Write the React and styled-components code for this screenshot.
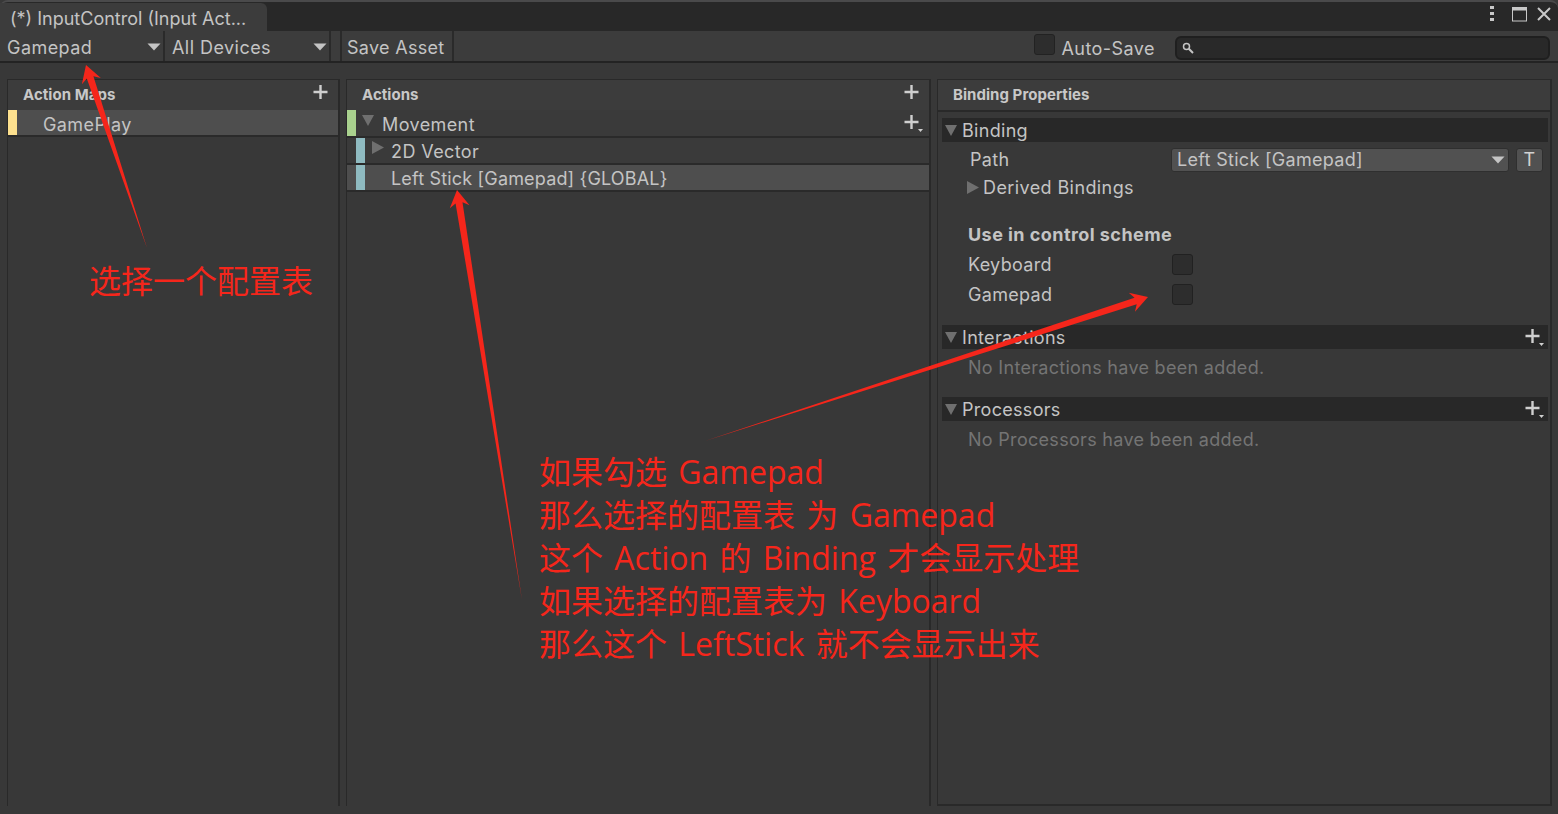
import React from 'react'
import styled, { createGlobalStyle } from 'styled-components'

const GlobalStyle = createGlobalStyle`
  html, body {
    margin: 0;
    background: #383838;
    overflow: hidden;
  }
  * { box-sizing: border-box; }
`

const Window = styled.div`
  position: relative;
  width: 1558px;
  height: 814px;
  display: flex;
  flex-direction: column;
  background: #383838;
  color: #c4c4c4;
  font-family: Inter, "Noto Sans", sans-serif;
  font-size: 18px;
  letter-spacing: 0.3px;
  overflow: hidden;
`

const TabBar = styled.div`
  height: 31px;
  flex: none;
  display: flex;
  align-items: flex-end;
  justify-content: space-between;
  background: #282828;
  border-top: 2px solid #4a4a4b;
  border-radius: 8px 8px 0 0;
`

const Tab = styled.div`
  width: 267px;
  height: 28px;
  padding: 2px 0 0 10px;
  display: flex;
  align-items: center;
  background: #3c3c3c;
  border-radius: 0 6px 0 0;
  letter-spacing: 0;
`

const WindowButtons = styled.div`
  display: flex;
  align-items: center;
  padding: 0 7px 9px 0;
`

const ButtonSlot = styled.span`
  display: flex;
  margin-right: ${p => p.$gap || 0}px;
`

const Toolbar = styled.div`
  height: 32px;
  flex: none;
  display: flex;
  align-items: stretch;
  padding-left: 3px;
  background: #3c3c3c;
  border-bottom: 2px solid #232323;
`

const ToolSelect = styled.div`
  width: ${p => p.$width}px;
  padding: 2px 2px 0 4px;
  margin-right: 3px;
  display: flex;
  align-items: center;
  justify-content: space-between;
  border-right: 2px solid #2a2a2a;
  letter-spacing: 0.45px;
`

const ToolSpacer = styled.div`
  width: 8px;
  border-right: 2px solid #2a2a2a;
`

const ToolButton = styled.div`
  width: 112px;
  padding: 2px 0 0 5px;
  display: flex;
  align-items: center;
  border-right: 2px solid #2a2a2a;
`

const ToolRight = styled.div`
  flex: 1;
  display: flex;
  align-items: center;
  justify-content: flex-end;
  padding-right: 8px;
`

const AutoSave = styled.div`
  margin-right: 20px;
  padding-top: 4px;
  letter-spacing: 0.45px;
`

const SmallCheck = styled.div`
  width: 21px;
  height: 21px;
  margin: -3px 6px 0 0;
  background: #2d2d2d;
  border: 1px solid #222;
  border-radius: 3px;
`

const Search = styled.div`
  width: 375px;
  height: 24px;
  margin-top: 3px;
  padding-left: 5px;
  display: flex;
  align-items: center;
  background: #292929;
  border: 2px solid #1f1f1f;
  border-radius: 6px;
`

const Panes = styled.div`
  flex: 1;
  display: flex;
  gap: 6px;
  padding: 16px 6px 8px 7px;
  min-height: 0;
`

const Pane = styled.div`
  width: ${p => p.$width}px;
  flex: none;
  display: flex;
  flex-direction: column;
  border: solid #292929;
  border-width: 1px 2px ${p => (p.$closed ? '2px' : '0')} 1px;
`

const PaneHeader = styled.div`
  height: ${p => (p.$line ? 32 : 30)}px;
  flex: none;
  padding: 0 5px ${p => (p.$line ? 1 : 2)}px 15px;
  display: flex;
  align-items: center;
  justify-content: space-between;
  background: #3c3c3c;
  font-size: 15px;
  font-weight: 700;
  letter-spacing: 0.05px;
  color: #c8c8c8;
  border-bottom: ${p => (p.$line ? '2px solid #292929' : '0')};
`

const Row = styled.div`
  height: ${p => p.$height || 27}px;
  flex: none;
  display: flex;
  align-items: center;
  background: ${p => (p.$selected ? '#4e4e4e' : '#3a3a3a')};
  border-bottom: 2px solid #2a2a2a;
`

const Strip = styled.div`
  width: ${p => p.$width || 9}px;
  height: 100%;
  flex: none;
  margin-left: ${p => p.$indent || 0}px;
  background: ${p => p.$color};
`

const RowLabel = styled.span`
  margin-left: ${p => p.$left}px;
  padding-top: ${p => p.$top ?? 2}px;
  white-space: nowrap;
  letter-spacing: ${p => (p.$tight ? '0.17px' : '0.4px')};
`

const RowEnd = styled.div`
  margin-left: auto;
  padding-right: ${p => p.$pad ?? 5}px;
  display: flex;
  align-items: center;
`

const Twist = styled.span`
  margin-left: ${p => p.$left}px;
  margin-top: -6px;
  width: 12px;
  display: flex;
  flex: none;
`

const PropertyBody = styled.div`
  flex: 1;
  padding: 6px 2px 0 4px;
`

const FoldBar = styled.div`
  height: 24px;
  padding-left: 3px;
  display: flex;
  align-items: center;
  gap: 5px;
  background: #282828;
  margin-top: ${p => p.$top || 0}px;
`

const Field = styled.div`
  height: ${p => p.$height || 30}px;
  padding-left: ${p => p.$left || 26}px;
  display: flex;
  align-items: center;
  margin-top: ${p => p.$top || 0}px;
  font-weight: ${p => (p.$bold ? 700 : 400)};
  letter-spacing: ${p => (p.$bold ? '0.45px' : 'inherit')};
  color: ${p => (p.$muted ? '#747474' : '#c4c4c4')};
`

const FieldName = styled.span`
  width: ${p => p.$width || 204}px;
  flex: none;
`

const PathSelect = styled.div`
  width: 338px;
  height: 24px;
  padding: 0 3px 0 5px;
  display: flex;
  align-items: center;
  justify-content: space-between;
  background: #515151;
  border: 1px solid #2f2f2f;
  border-radius: 3px;
`

const TButton = styled.div`
  width: 27px;
  height: 24px;
  margin-left: 7px;
  display: flex;
  align-items: center;
  justify-content: center;
  background: #515151;
  border: 1px solid #2f2f2f;
  border-radius: 3px;
  color: #d2d2d2;
`

const Check = styled.div`
  width: 21px;
  height: 21px;
  background: #2d2d2d;
  border: 1px solid #212121;
  border-radius: 3px;
`

const Overlay = styled.svg`
  position: absolute;
  left: 0;
  top: 0;
  pointer-events: none;
`

const Note = styled.div`
  position: absolute;
  left: ${p => p.$x}px;
  top: ${p => p.$y}px;
  color: #f5261b;
  font-family: "Open Sans", "Noto Sans CJK SC", sans-serif;
  font-size: 32px;
  line-height: 43px;
  letter-spacing: 0;
  word-spacing: 3px;
  white-space: pre;
`

const Caret = () => (
  <svg width="14" height="8" viewBox="0 0 14 8"><path d="M0.5 0.5h13L7 7.5z" fill="#c4c4c4" /></svg>
)

const Down = () => (
  <svg width="12" height="12" viewBox="0 0 12 12"><path d="M0 1h12L6 12z" fill="#6f6f6f" /></svg>
)

const Right = () => (
  <svg width="12" height="13" viewBox="0 0 12 13"><path d="M0 0l12 6.5L0 13z" fill="#6f6f6f" /></svg>
)

const Plus = ({ more }) => (
  <svg width="20" height="20" viewBox="0 0 20 20">
    {more
      ? <path d="M7.500 2v14M0.500 9h14" stroke="#cfcfcf" strokeWidth="2.400" fill="none" />
      : <path d="M7.500 1v14M0.500 8h14" stroke="#cfcfcf" strokeWidth="2.400" fill="none" />}
    {more && <path d="M14 16h5l-2.500 3z" fill="#cfcfcf" />}
  </svg>
)

const Lens = () => (
  <svg width="12" height="12" viewBox="0 0 12 12">
    <circle cx="4.500" cy="4.500" r="3" stroke="#c4c4c4" strokeWidth="1.500" fill="none" />
    <path d="M6.800 6.800L11 11" stroke="#c4c4c4" strokeWidth="2" />
  </svg>
)

const Dots = () => (
  <svg width="6" height="16" viewBox="0 0 6 16" fill="#c8c8c8">
    <rect x="1" y="0" width="4" height="3" /><rect x="1" y="6" width="4" height="3" /><rect x="1" y="12" width="4" height="3" />
  </svg>
)

const Maximize = () => (
  <svg width="16" height="15" viewBox="0 0 16 15">
    <rect x="0.500" y="0.500" width="14" height="13.500" fill="none" stroke="#c8c8c8" />
    <rect x="0.500" y="0.500" width="14" height="3" fill="#c8c8c8" />
  </svg>
)

const Close = () => (
  <svg width="14" height="14" viewBox="0 0 14 14"><path d="M1 1l12 12M13 1L1 13" stroke="#c8c8c8" strokeWidth="2" /></svg>
)

// tapered arrow, thin at the tail
const arrowPoints = ([tx, ty], [hx, hy]) => {
  const len = Math.hypot(hx - tx, hy - ty)
  const ux = (hx - tx) / len
  const uy = (hy - ty) / len
  const px = -uy
  const py = ux
  const at = (along, side) => `${hx - ux * along + px * side},${hy - uy * along + py * side}`
  return [
    `${tx},${ty}`,
    at(13, 3.500),
    at(17, 10),
    at(0, 0),
    at(17, -10),
    at(13, -3.500),
  ].join(' ')
}

const arrows = [
  [[147, 248], [86, 65]],
  [[522, 600], [457, 190]],
  [[705, 441], [1148, 297]],
]

export default function App() {
  return (
    <Window>
      <GlobalStyle />
      <TabBar>
        <Tab>(*) InputControl (Input Act...</Tab>
        <WindowButtons>
          <ButtonSlot $gap={17}><Dots /></ButtonSlot>
          <ButtonSlot $gap={9}><Maximize /></ButtonSlot>
          <ButtonSlot><Close /></ButtonSlot>
        </WindowButtons>
      </TabBar>

      <Toolbar>
        <ToolSelect $width={162}>Gamepad <Caret /></ToolSelect>
        <ToolSelect $width={163}>All Devices <Caret /></ToolSelect>
        <ToolSpacer />
        <ToolButton>Save Asset</ToolButton>
        <ToolRight>
          <SmallCheck />
          <AutoSave>Auto-Save</AutoSave>
          <Search><Lens /></Search>
        </ToolRight>
      </Toolbar>

      <Panes>
        <Pane $width={333}>
          <PaneHeader>Action Maps <Plus /></PaneHeader>
          <Row $selected>
            <Strip $color="#fde08e" />
            <RowLabel $left={26} $top={4}>GamePlay</RowLabel>
          </Row>
        </Pane>

        <Pane $width={585}>
          <PaneHeader>Actions <Plus /></PaneHeader>
          <Row $height={28}>
            <Strip $color="#a9d18e" />
            <Twist $left={6}><Down /></Twist>
            <RowLabel $left={8}>Movement</RowLabel>
            <RowEnd><Plus more /></RowEnd>
          </Row>
          <Row>
            <Strip $color="#8fbbc1" $indent={9} />
            <Twist $left={7}><Right /></Twist>
            <RowLabel $left={7}>2D Vector</RowLabel>
          </Row>
          <Row $selected>
            <Strip $color="#8fbbc1" $indent={9} />
            <RowLabel $left={26} $tight>Left Stick [Gamepad] {'{GLOBAL}'}</RowLabel>
          </Row>
        </Pane>

        <Pane $width={615} $closed>
          <PaneHeader $line>Binding Properties</PaneHeader>
          <PropertyBody>
            <FoldBar><Down /> Binding</FoldBar>
            <Field $height={35} $left={28}><FieldName $width={201}>Path</FieldName>
              <PathSelect>Left Stick [Gamepad] <Caret /></PathSelect>
              <TButton>T</TButton>
            </Field>
            <Field $height={20} $left={25}>
              <Right /><RowLabel $left={4} $top={0}>Derived Bindings</RowLabel>
            </Field>
            <Field $height={30} $top={22} $bold>Use in control scheme</Field>
            <Field><FieldName>Keyboard</FieldName><Check /></Field>
            <Field><FieldName>Gamepad</FieldName><Check /></Field>
            <FoldBar $top={16}><Down /> Interactions <RowEnd $pad={3}><Plus more /></RowEnd></FoldBar>
            <Field $height={36} $muted>No Interactions have been added.</Field>
            <FoldBar $top={12}><Down /> Processors <RowEnd $pad={3}><Plus more /></RowEnd></FoldBar>
            <Field $height={36} $muted>No Processors have been added.</Field>
          </PropertyBody>
        </Pane>
      </Panes>

      <Overlay width="1558" height="814" viewBox="0 0 1558 814">
        {arrows.map(([tail, tip]) => (
          <polygon key={tip[0]} points={arrowPoints(tail, tip)} fill="#f5261b" />
        ))}
      </Overlay>
      <Note $x={89} $y={259}>选择一个配置表</Note>
      <Note $x={539} $y={450}>{`如果勾选 Gamepad
那么选择的配置表 为 Gamepad
这个 Action 的 Binding 才会显示处理
如果选择的配置表为 Keyboard
那么这个 LeftStick 就不会显示出来`}</Note>
    </Window>
  )
}
